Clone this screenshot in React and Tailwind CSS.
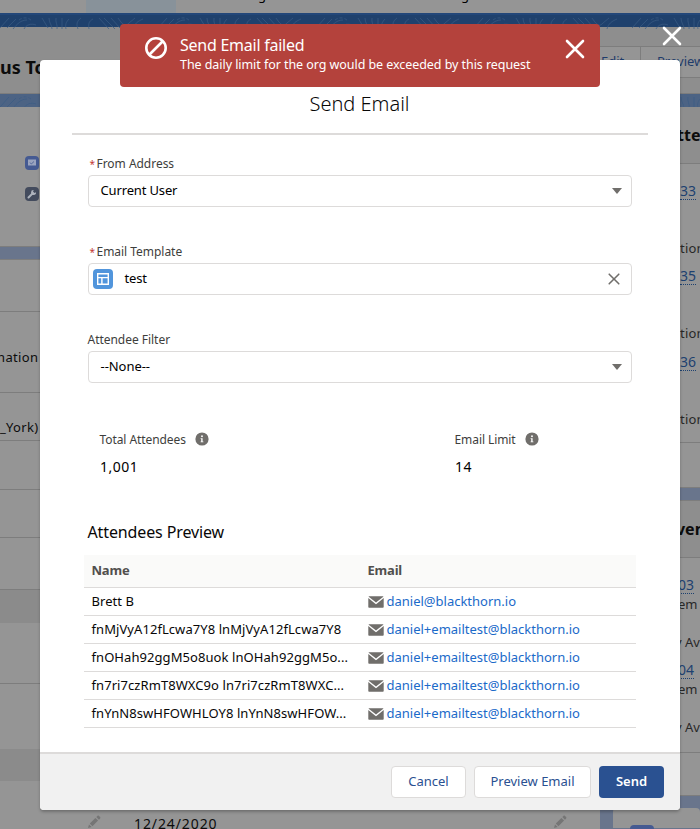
const attendees = [
    { name: 'Brett B', email: 'daniel@blackthorn.io' },
    { name: 'fnMjVyA12fLcwa7Y8 lnMjVyA12fLcwa7Y8', email: 'daniel+emailtest@blackthorn.io' },
    { name: 'fnOHah92ggM5o8uok lnOHah92ggM5o...', email: 'daniel+emailtest@blackthorn.io' },
    { name: 'fn7ri7czRmT8WXC9o ln7ri7czRmT8WXC...', email: 'daniel+emailtest@blackthorn.io' },
    { name: 'fnYnN8swHFOWHLOY8 lnYnN8swHFOW...', email: 'daniel+emailtest@blackthorn.io' },
];

const CloseIcon = ({ className, width = 2.6 }) => (
    <svg viewBox="0 0 20 20" className={className} fill="none" stroke="currentColor"
        strokeWidth={width} strokeLinecap="round">
        <path d="M2 2l16 16M18 2L2 18" />
    </svg>
);

const BanIcon = ({ className }) => (
    <svg viewBox="0 0 22 22" className={className} fill="none" stroke="currentColor" strokeWidth="2.6">
        <circle cx="11" cy="11" r="9.7" />
        <path d="M4.500 17.500L17.500 4.500" />
    </svg>
);

const InfoIcon = () => (
    <svg viewBox="0 0 14 14" className="size-[14px]">
        <circle cx="7" cy="7" r="6.6" fill="#706e6b" />
        <circle cx="7" cy="4.2" r="0.95" fill="#fff" />
        <path d="M5.6 6.2h2v3.2h.8v.9H5.6v-.9h.6V7.1h-.6z" fill="#fff" />
    </svg>
);

const MailIcon = () => (
    <svg viewBox="0 0 16 12" className="w-4 h-3 shrink-0">
        <path d="M0.3 1.9V10.9a.8.8 0 0 0 .8.8h13.800a.8.8 0 0 0 .8-.8V1.900L8.700 7.800a1 1 0 0 1-1.400 0z" fill="#706e6b" />
        <path d="M1 .3h14c.4 0 .5.3.3.5L8.3 6.300a.5.5 0 0 1-.6 0L.7.8C.5.6.6.3 1 .3z" fill="#706e6b" />
    </svg>
);

const PencilIcon = () => (
    <svg viewBox="0 0 14 14" className="size-[14px]" fill="#757575">
        <path d="M1 13l1-3.6L4.6 12zM2.8 8.6l5.6-5.7 2.7 2.7-5.7 5.7zM9.3 2l1.1-1.1c.5-.5 1.1-.5 1.6 0l1.1 1.1c.5.5.5 1.1 0 1.6L12 4.7z" />
    </svg>
);

// Topographic line texture of the header bands
const Waves = ({ className }) => (
    <svg className={className} width="700" height="14" fill="none" stroke="currentColor" strokeWidth="0.7">
        <defs>
            <pattern id="topo" width="158" height="14" patternUnits="userSpaceOnUse">
                <path d="M0 13L9 3M7 13l9-9M13 14c4-5 8-9 14-9M24 14c2-4 7-6 12-4M42 3l6 10M49 3c0 5 3 7 3 11M56 3c-1 4 2 7 1 11M62 3v11M69 4c-3 3-4 6-3 10M81 3c-4 3-5 6-3 11M93 4c-4 2-5 5-4 10M99 3l10 11M104 3l11 11M111 3l9 10M118 3c4 6 7 9 10 6s5-4 7-6M133 14c1-5 5-8 10-10" />
                <path d="M19 5c4-3 9-3 13 1" strokeDasharray="3 2" />
            </pattern>
        </defs>
        <rect width="700" height="14" fill="url(#topo)" stroke="none" />
    </svg>
);

const Caret = () => (
    <span className="border-x-[5.5px] border-x-transparent border-t-[6.5px] border-t-[#706e6b]"></span>
);

const FieldLabel = ({ required, children, className = '' }) => (
    <div className={`-ml-[0.5px] flex h-[23px] items-center pt-[1px] text-[12px] tracking-[-0.03px] text-[#3e3e3c] ${className}`}>
        {required && <span className="ml-[2px] mr-[1.5px] text-[10px] text-[#c23934]">*</span>}
        {children}
    </div>
);

const RelatedItem = ({ id, text, className }) => (
    <div className={className}>
        <span className="inline-block h-[18px] border-b border-dotted border-[#1d4170] text-[14px] leading-[18px] text-[#1d4170]">{id}</span>
        {text}
    </div>
);

const LeftColumn = () => (
    <div className="w-[600px] shrink-0 text-[13px] text-[#0c0c0c]">
        <div className="h-[140px] border-b border-[#7d7d7d] bg-[#959595] pl-[25px] pt-[49px]">
            <div className="flex size-[14px] items-center justify-center rounded-[4px] bg-[#455a92]">
                <svg viewBox="0 0 8 8" className="size-2"><path d="M0 .5h8v6H0z" fill="#9aa4bf" /><path d="M2 3.500l1.300 1.500L6 2.500" stroke="#455a92" strokeWidth="0.8" fill="none" /></svg>
            </div>
            <div className="mt-[17px] flex size-[14px] items-center justify-center rounded-[4px] bg-[#434b5d]">
                <svg viewBox="0 0 10 10" className="size-[10px]"><path d="M1.500 8.500L5.500 4.500" stroke="#aeb3bd" strokeWidth="2" strokeLinecap="round" /><path d="M9 3.200A2.500 2.500 0 1 1 6.700 1L6 2.500 7.500 4z" fill="#aeb3bd" /></svg>
            </div>
        </div>
        <div className="h-[12px] bg-[#69758c]"></div>
        <div className="bg-[#959595]">
            <div className="h-[53px] border-y border-[#7d7d7d]"></div>
            <div className="h-[81px] border-b border-[#7d7d7d] pt-[36px]">
                <span className="-ml-[3px] tracking-[0.35px]">nation</span>
            </div>
            <div className="h-[48px] border-b border-[#7d7d7d] pt-[25px]">
                <span className="tracking-[0.3px]">_York)</span>
            </div>
            <div className="h-[49px] border-b border-[#7d7d7d]"></div>
            <div className="h-[48px] border-b border-[#7d7d7d]"></div>
            <div className="h-[52px] border-b border-[#7d7d7d]"></div>
            <div className="h-[33px] bg-[#8b8b8b]"></div>
            <div className="h-[61px] border-b border-[#7d7d7d]"></div>
            <div className="h-[65px]"></div>
            <div className="h-[32px] bg-[#8b8b8b]"></div>
            <div className="flex h-[48px] pl-[87px] pt-[34px]">
                <PencilIcon />
                <span className="ml-[33px] w-[419px] text-[14px] leading-[18px] tracking-[0.9px]">12/24/2020</span>
                <PencilIcon />
            </div>
        </div>
    </div>
);

const RightColumn = () => (
    <div className="w-[87px] shrink-0 text-[13px] leading-[18px] text-[#282828]">
        <div className="h-[381px] border-b border-[#7d7d7d] bg-[#959595]">
            <div className="h-[57px] border-b border-[#7d7d7d] bg-[#8e8e8e] pl-[53px] pt-[17px] text-[16px] font-bold leading-[22px] text-[#0c0c0c]">Attendees</div>
            <RelatedItem id="33" className="h-[85px] pl-[67px] pt-[18px]" text={<div className="pt-[39px] tracking-[0.2px]">tion</div>} />
            <RelatedItem id="35" className="h-[86px] pl-[67px] pt-[18px]" text={<div className="pt-[39px] tracking-[0.2px]">tion</div>} />
            <RelatedItem id="36" className="h-[108px] border-b border-[#7d7d7d] pl-[67px] pt-[18px]" text={<div className="pt-[39px] tracking-[0.2px]">tion</div>} />
        </div>
        <div className="h-[12px] bg-[#69758c]"></div>
        <div className="h-[296px] border-y border-[#7d7d7d] bg-[#959595]">
            <div className="h-[57px] border-b border-[#7d7d7d] bg-[#8e8e8e] pl-[54px] pt-[17px] text-[16px] font-bold leading-[22px] text-[#0c0c0c]">Events</div>
            <RelatedItem id="03" className="h-[85px] pl-[65px] pt-[18px]" text={<><div className="pt-[1px]">em</div><div className="-ml-[3px] whitespace-nowrap pt-[20px]">y Av</div></>} />
            <RelatedItem id="04" className="h-[110px] border-b border-[#7d7d7d] pl-[65px] pt-[18px]" text={<><div className="pt-[1px]">em</div><div className="-ml-[3px] whitespace-nowrap pt-[20px]">y Av</div></>} />
        </div>
        <div className="h-[12px] bg-[#69758c]"></div>
        <div className="h-[20px] rounded-t-[4px] bg-[#959595] pl-[17px] pt-[17px]">
            <div className="h-[22px] w-[24px] rounded-[4px] bg-[#455a92]"></div>
        </div>
    </div>
);

const RecordPage = () => (
    <div className="h-[829px] overflow-hidden bg-[#69758c]">
        <div className="flex h-[13px] overflow-hidden bg-[#959595] text-[13px] leading-[18px]">
            <div className="ml-[86px] w-[90px] bg-[#88929a]"></div>
            <span className="-mt-[14px] ml-[82px]">g</span>
            <span className="-mt-[14px] ml-[195px]">g</span>
        </div>
        <div className="h-[14px] border-t-2 border-[#234779] bg-[#1f416d]">
            <Waves className="text-[#3a5a83]" />
        </div>
        <div className="flex h-[67px] justify-between border-b border-[#7d7d7d] bg-[#8e8e8e]">
            <div className="pt-[28px] text-[18px] font-bold leading-[24px] text-[#0c0c0c]">us Tour</div>
            <div className="mt-[19px] flex h-[32px] border-y border-[#7d7d7d] bg-[#959595] text-[13px] leading-[28px] text-[#1f3c6b]">
                <div className="w-[57px] border-r border-[#7d7d7d] pl-[17px]">Edit</div>
                <div className="w-[59px] overflow-hidden pl-[16px]">Preview</div>
            </div>
        </div>
        <div className="h-[13px] bg-[#4c6384]">
            <Waves className="text-[#647892]" />
        </div>
        <div className="flex justify-between">
            <LeftColumn />
            <RightColumn />
        </div>
    </div>
);

const Toast = () => (
    <div className="absolute left-[120px] top-[24px] flex h-[63px] w-[480px] rounded-[4px] bg-[#b4423c] text-white">
        <BanIcon className="ml-[25px] mt-[13px] size-[22px]" />
        <div className="ml-[13px] grow pt-[11px]">
            <div className="whitespace-nowrap text-[16px] leading-[20px] tracking-[-0.25px]">Send Email failed</div>
            <div className="whitespace-nowrap text-[12.5px] leading-[20px] tracking-[-0.06px]">The daily limit for the org would be exceeded by this request</div>
        </div>
        <CloseIcon className="mr-[15px] mt-[15px] size-[20px]" />
    </div>
);

const AttendeesTable = () => (
    <div className="-mx-1 w-[552px]">
        <div className="flex h-[33px] items-center border-b border-[#dddbda] bg-[#fafaf9] text-[13px] font-bold text-[#514f4d]">
            <div className="w-[276px] pl-[7.5px] tracking-[-0.2px]">Name</div>
            <div className="pl-[7.5px] tracking-[-0.2px]">Email</div>
        </div>
        {attendees.map((row, i) => (
            <div key={i} className="flex h-[28px] items-center border-b border-[#dddbda] text-[13px] text-[#080707]">
                <div className="w-[276px] whitespace-nowrap pl-[7.5px] tracking-[0.07px]">{row.name}</div>
                <div className="flex items-center gap-[3px] whitespace-nowrap pl-[7.5px] text-[#1b6ac9]">
                    <MailIcon />
                    {row.email}
                </div>
            </div>
        ))}
    </div>
);

const Modal = () => (
    <div className="absolute left-[40px] top-[60px] flex h-[750px] w-[640px] flex-col rounded-[4px] bg-white shadow-[0_2px_3px_rgba(0,0,0,0.25)]">
        <h2 className="mx-8 h-[75px] border-b-2 border-[#dddbda] pr-[1px] pt-[30px] text-center text-[20px] font-light leading-[28px] text-[#080707]">Send Email</h2>
        <div className="grow px-[48px] pt-[17px]">
            <FieldLabel required>From Address</FieldLabel>
            <div className="flex h-[32px] w-[544px] items-center justify-between rounded-[4px] border border-[#dddbda] pl-[11.5px] pr-[9px] text-[13px] tracking-[-0.15px]">
                Current User
                <Caret />
            </div>
            <FieldLabel required className="mt-[33px]">Email Template</FieldLabel>
            <div className="flex h-[32px] w-[544px] items-center rounded-[4px] border border-[#dddbda] pl-1 pr-[11px] text-[13px]">
                <span className="flex size-5 items-center justify-center rounded-[4px] bg-[#5195dc]">
                    <svg viewBox="0 0 12 12" className="size-3" fill="none" stroke="#fff" strokeWidth="1.4">
                        <path d="M.7.700h10.600v10.600H.7zM.7 4.600h10.600M4.900 4.600v6.700" />
                    </svg>
                </span>
                <span className="ml-[11.5px] grow tracking-[-0.2px]">test</span>
                <CloseIcon className="size-[12px] text-[#706e6b]" width={2.6} />
            </div>
            <FieldLabel className="mt-[33px]">Attendee Filter</FieldLabel>
            <div className="flex h-[32px] w-[544px] items-center justify-between rounded-[4px] border border-[#dddbda] pl-[11.5px] pr-[9px] text-[13px] tracking-[-0.05px]">
                --None--
                <Caret />
            </div>
            <div className="mt-[46px] flex pl-3">
                <div className="w-[355px]">
                    <div className="-ml-[0.5px] flex h-[20px] items-center gap-[9px] text-[12px] tracking-[-0.08px] text-[#3e3e3c]"><span className="pt-[1px]">Total Attendees</span> <InfoIcon /></div>
                    <div className="mt-[8px] text-[14px] leading-[20px] tracking-[0.5px]">1,001</div>
                </div>
                <div>
                    <div className="-ml-[0.5px] flex h-[20px] items-center gap-[9px] text-[12px] tracking-[-0.08px] text-[#3e3e3c]"><span className="pt-[1px]">Email Limit</span> <InfoIcon /></div>
                    <div className="mt-[8px] text-[14px] leading-[20px] tracking-[0.5px]">14</div>
                </div>
            </div>
            <h3 className="-ml-[0.5px] mb-[11px] mt-[43px] text-[16px] leading-[24px] tracking-[-0.12px] text-[#080707]">Attendees Preview</h3>
            <AttendeesTable />
        </div>
        <div className="flex h-[58px] shrink-0 items-center justify-end gap-2 rounded-b-[4px] border-t-2 border-[#dddbda] bg-[#f1f1f1] pr-4 text-[13px] text-[#2a5091]">
            <button className="h-8 w-[75px] rounded-[4px] border border-[#dddbda] bg-white">Cancel</button>
            <button className="h-8 w-[117px] rounded-[4px] border border-[#dddbda] bg-white">Preview Email</button>
            <button className="h-8 w-[65px] rounded-[4px] bg-[#2a5191] font-semibold text-white">Send</button>
        </div>
    </div>
);

const App = () => {
    return (
        <div className="relative h-[829px] w-[700px] overflow-hidden font-['Noto_Sans',sans-serif]">
            <RecordPage />
            <CloseIcon className="absolute left-[662px] top-[26px] size-[20px] text-white" />
            <Modal />
            <Toast />
        </div>
    );
};

export default App;
